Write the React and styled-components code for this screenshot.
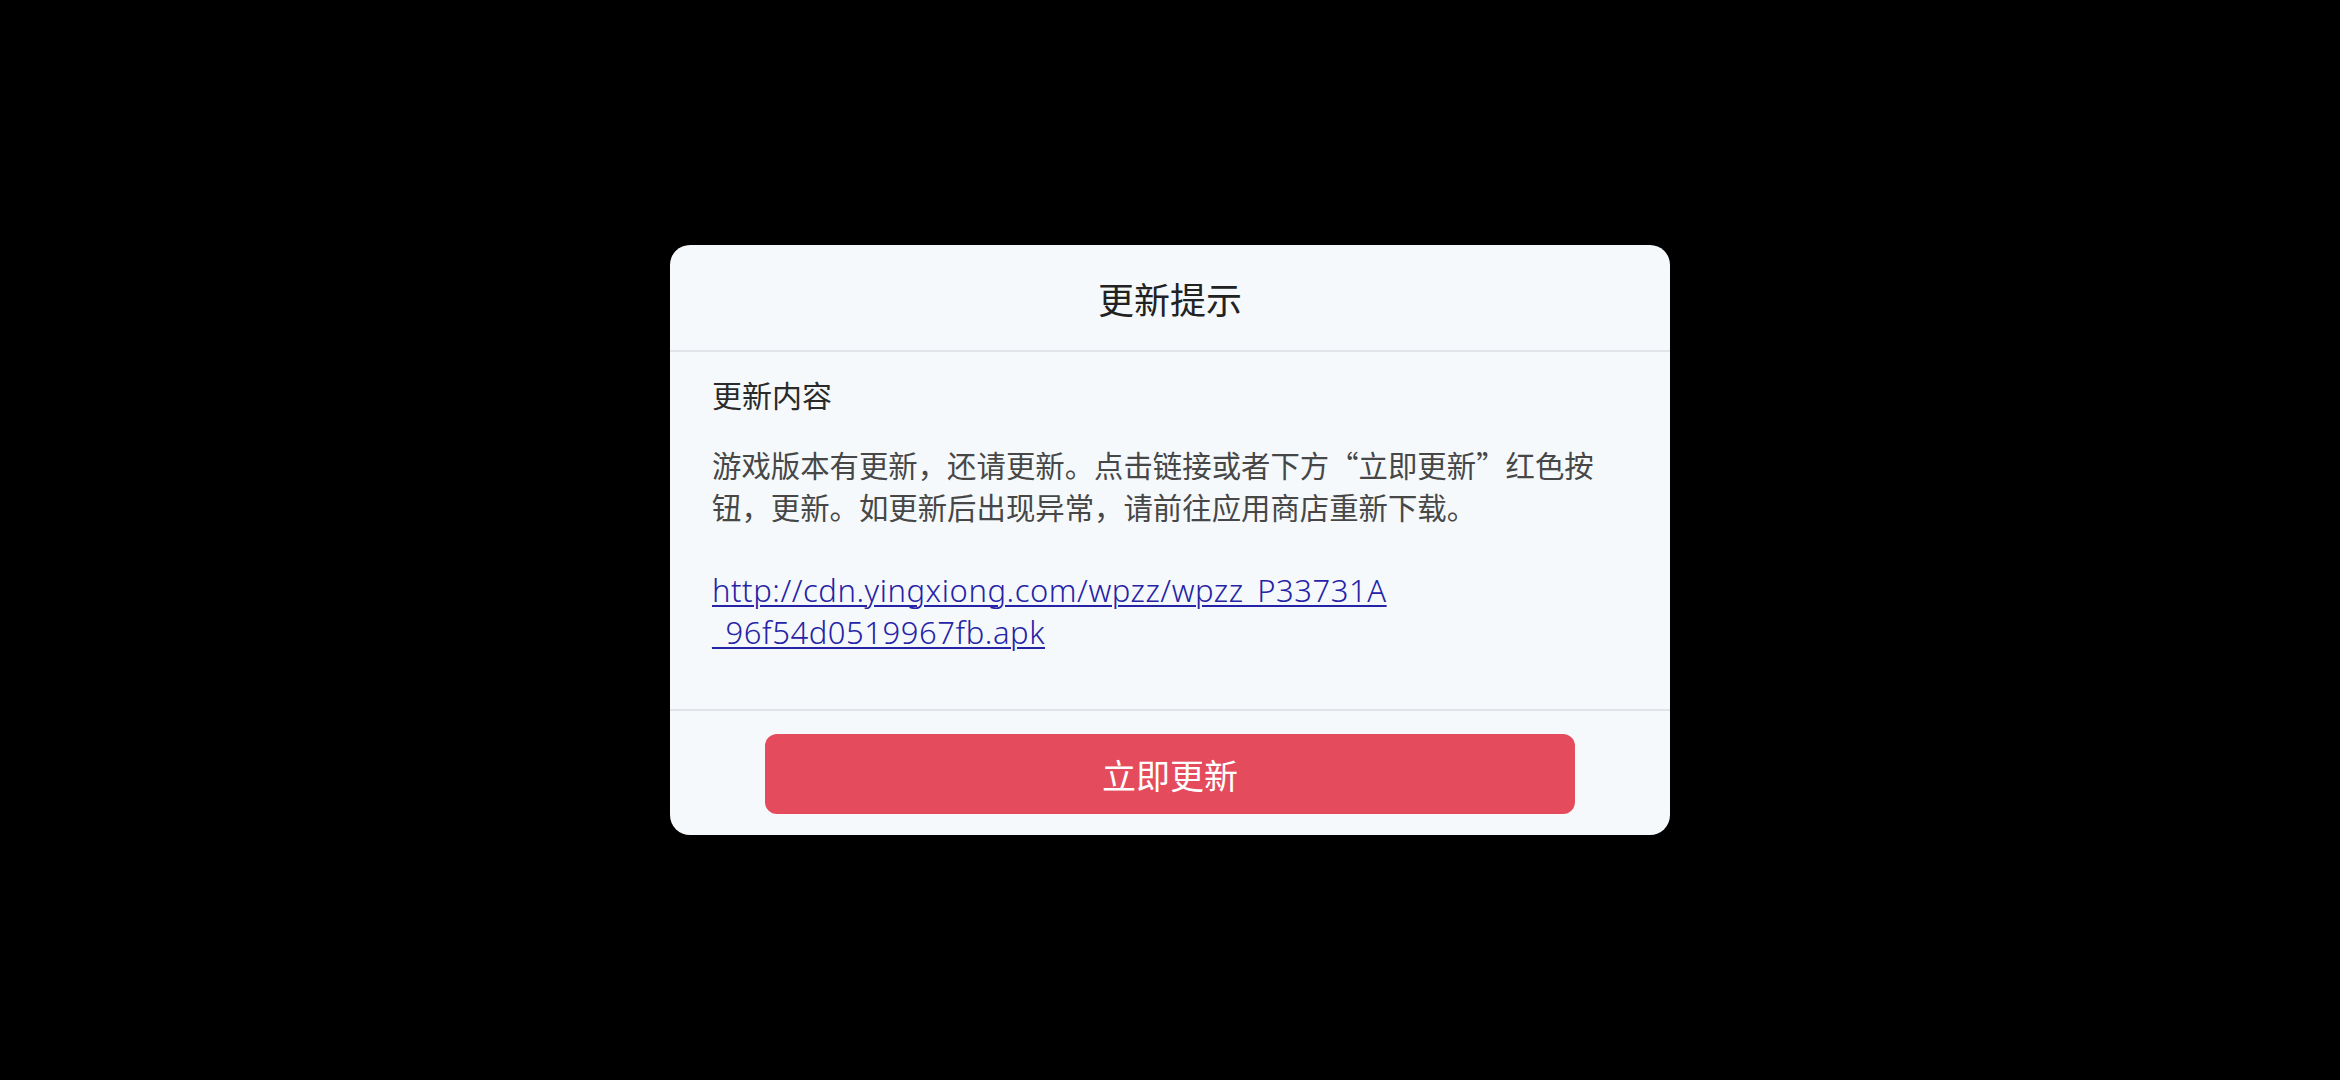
import React from 'react';
import styled, { createGlobalStyle } from 'styled-components';

const GlobalStyle = createGlobalStyle`
  html, body {
    margin: 0;
    padding: 0;
    background: #000;
  }
  body {
    font-family: "Noto Sans", "Noto Sans CJK SC", sans-serif;
  }
`;

const Overlay = styled.div`
  width: 100vw;
  height: 100vh;
  display: flex;
  align-items: center;
  justify-content: center;
  background: #000;
`;

const Dialog = styled.div`
  width: 1000px;
  background: #f5f9fc;
  border-radius: 20px;
  overflow: hidden;
  display: flex;
  flex-direction: column;
`;

const Header = styled.div`
  height: 105px;
  display: flex;
  align-items: center;
  justify-content: center;
  border-bottom: 2px solid #e1e5e9;
`;

const Title = styled.h2`
  margin: 0;
  font-size: 36px;
  font-weight: 400;
  color: #222;
  font-family: "Noto Sans CJK SC", sans-serif;
`;

const Body = styled.div`
  padding: 21px 42px 56px;
  border-bottom: 2px solid #e1e5e9;
`;

const Subtitle = styled.h3`
  margin: 0 0 28px;
  font-size: 30px;
  line-height: 42px;
  font-weight: 400;
  color: #2a2a2a;
  font-family: "Noto Sans CJK SC", sans-serif;
`;

const Notes = styled.p`
  margin: 0 0 42px;
  font-size: 29.4px;
  line-height: 42px;
  color: #474747;
  font-family: "Noto Sans CJK SC", sans-serif;
`;

const Link = styled.a`
  display: block;
  font-size: 31px;
  line-height: 42px;
  letter-spacing: 0.55px;
  color: #2523a6;
  text-decoration: underline;
  text-decoration-thickness: 2px;
  text-underline-offset: 3px;
  font-family: "Noto Sans", sans-serif;
  font-weight: 300;
`;

const LinkLine = styled.span`
  display: block;
  width: fit-content;
`;

const Footer = styled.div`
  padding: 23px 0 21px;
  display: flex;
  justify-content: center;
`;

const Button = styled.button`
  width: 810px;
  height: 80px;
  border: none;
  border-radius: 12px;
  background: #e44c5d;
  color: #fff;
  font-size: 34px;
  font-family: "Noto Sans CJK SC", sans-serif;
  cursor: pointer;
`;

const apkUrl = 'http://cdn.yingxiong.com/wpzz/wpzz_P33731A_96f54d0519967fb.apk';

export default function App() {
  return (
    <Overlay>
      <GlobalStyle />
      <Dialog>
        <Header>
          <Title>更新提示</Title>
        </Header>
        <Body>
          <Subtitle>更新内容</Subtitle>
          <Notes>
            游戏版本有更新，还请更新。点击链接或者下方“立即更新”红色按钮，更新。如更新后出现异常，请前往应用商店重新下载。
          </Notes>
          <Link href={apkUrl}>
            <LinkLine>http://cdn.yingxiong.com/wpzz/wpzz_P33731A</LinkLine>
            <LinkLine>_96f54d0519967fb.apk</LinkLine>
          </Link>
        </Body>
        <Footer>
          <Button>立即更新</Button>
        </Footer>
      </Dialog>
    </Overlay>
  );
}
